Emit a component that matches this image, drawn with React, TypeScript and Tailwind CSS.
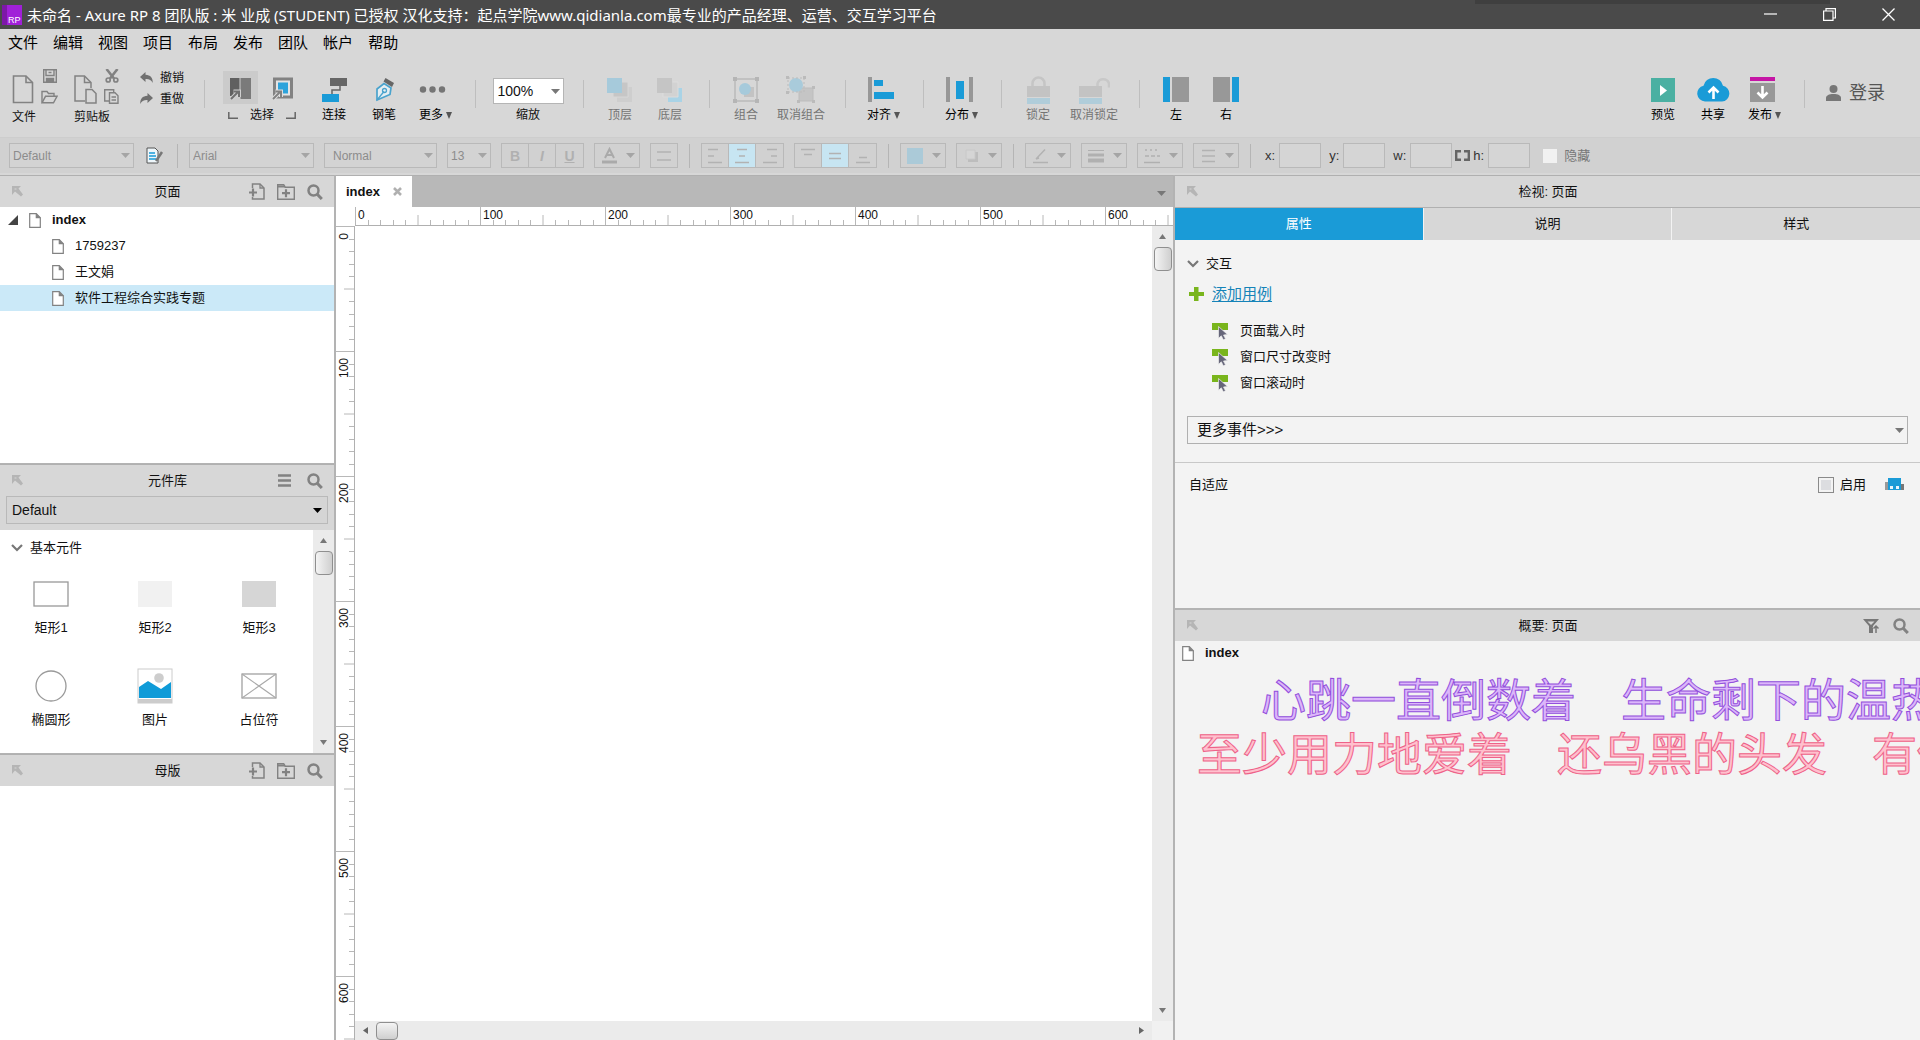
import { ReactNode } from "react";
import clsx from "clsx";

const GREY = "#828282";
const BLUE = "#1a9bd7";

function Caret({ className = "" }: { className?: string }) {
  return (
    <svg width="9" height="5" viewBox="0 0 9 5" className={clsx("shrink-0", className)}>
      <path d="M0 0h9L4.500 5z" fill="currentColor" />
    </svg>
  );
}

function PageIcon({ w = 12, h = 15 }: { w?: number; h?: number }) {
  return (
    <svg width={w} height={h} viewBox="0 0 12 15" fill="#fff" stroke={GREY} strokeWidth="1.2">
      <path d="M.7.7h6.600l4 4v9.600H.7z" />
      <path d="M7.300.7v4h4" fill={GREY} />
    </svg>
  );
}

function SearchIcon() {
  return (
    <svg width="16" height="16" viewBox="0 0 16 16" fill="none" stroke={GREY}>
      <circle cx="6.500" cy="6.500" r="5" strokeWidth="2.500" />
      <path d="M10 10l4.800 5" strokeWidth="3" />
    </svg>
  );
}

function AddPageIcon() {
  return (
    <svg width="16" height="17" viewBox="0 0 16 17" fill="none" stroke={GREY}>
      <path d="M3.500 5V1H11l4 4v11H3.500v-2" strokeWidth="1.500" />
      <path d="M11 1v4h4" strokeWidth="1.300" />
      <path d="M0 9.500h8M4 5.500v8" strokeWidth="2.200" />
    </svg>
  );
}

function AddFolderIcon() {
  return (
    <svg width="18" height="16" viewBox="0 0 18 16" fill="none" stroke={GREY}>
      <path d="M.7 15.300V.7h6l1.500 2.500h9.100v12.100z" strokeWidth="1.400" />
      <path d="M1 2.500h7" strokeWidth="2" />
      <path d="M5 9.200h8M9 5.200v8" strokeWidth="2.200" />
    </svg>
  );
}

function PanelHeader({ title, children }: { title: string; children?: ReactNode }) {
  return (
    <div className="grid h-8 shrink-0 grid-cols-[1fr_auto_1fr] items-center border-t border-[#b0b0b0] bg-[#d7d7d7] pr-[11px] pl-3">
      <svg width="11" height="11" viewBox="0 0 11 11">
        <path d="M0 0h9L6.500 2.500 11 8.500 9 10.500 3 5.500 0 9z" fill="#b5b5b5" />
        <path d="M2.500 3h2" stroke="#d7d7d7" />
      </svg>
      <h2 className="text-[13px] leading-5">{title}</h2>
      <div className="flex items-center justify-end gap-3">{children}</div>
    </div>
  );
}

function IconButton({ label, children }: { label: string; children: ReactNode }) {
  return (
    <button type="button" aria-label={label} className="flex items-center justify-center">
      {children}
    </button>
  );
}

/* ---------- main toolbar ---------- */

interface ToolProps {
  label: string;
  children: ReactNode;
  width?: string;
  disabled?: boolean;
  menu?: boolean;
}

function Tool({ label, children, width = "w-[50px]", disabled, menu }: ToolProps) {
  return (
    <button
      type="button"
      disabled={disabled}
      className={clsx("flex shrink-0 flex-col gap-[3px]", menu ? "w-[52px] items-start pl-2.5" : ["items-center", width])}
    >
      <span className="flex h-[29px] items-center">{children}</span>
      <span className={clsx("flex items-center gap-[3px] text-xs leading-4 whitespace-nowrap", disabled ? "text-[#747474]" : "text-black")}>
        {label}
        {menu && (
          <svg width="6" height="7" viewBox="0 0 6 7">
            <path d="M0 0h6L3 7z" fill="#555" />
          </svg>
        )}
      </span>
    </button>
  );
}

function ToolDivider() {
  return <div className="mt-[5px] mr-[11px] ml-[14px] h-7 w-px shrink-0 bg-[#bebebe]" />;
}

function FileGroup() {
  return (
    <div className="flex w-[62px] flex-col pl-3">
      <div className="-mt-1.5 flex gap-[7px]">
        <button type="button" aria-label="新建" className="pt-1.5">
          <svg width="22" height="29" viewBox="0 0 22 29" fill="none" stroke={GREY} strokeWidth="1.600">
            <path d="M1.500 1h12.500l6.500 6.500V27.500h-19z" />
            <path d="M14 1v6.500h6.500" />
          </svg>
        </button>
        <div className="flex flex-col justify-between">
          <IconButton label="保存">
            <svg width="14" height="14" viewBox="0 0 14 14" fill="none" stroke={GREY} strokeWidth="1.400">
              <path d="M.7.7h12.600v12.600H.7z" />
              <path d="M3 1v5.500h8V1M5.500 3.500h3" />
              <path d="M3.500 13V9.500h7V13" fill={GREY} />
            </svg>
          </IconButton>
          <IconButton label="打开">
            <svg width="17" height="14" viewBox="0 0 17 14" fill="none" stroke={GREY} strokeWidth="1.400">
              <path d="M1 12.500V1.500h5l1.500 2H13v2.500" />
              <path d="M1 12.800l3.500-6.500h11.500l-3.500 6.500z" />
            </svg>
          </IconButton>
        </div>
      </div>
      <span className="mt-[5px] text-xs leading-4">文件</span>
    </div>
  );
}

function ClipboardGroup() {
  return (
    <div className="flex w-[66px] flex-col pl-3">
      <div className="-mt-1.5 flex gap-[7px]">
        <button type="button" aria-label="粘贴" className="pt-1.5">
          <svg width="23" height="29" viewBox="0 0 23 29" fill="none" stroke={GREY} strokeWidth="1.500">
            <path d="M11 26H1V1h9.500l6.500 6.500V13" />
            <path d="M10.500 1v6.500H17" />
            <path d="M12 14.500h6l4 4V28H12z" />
          </svg>
        </button>
        <div className="flex flex-col justify-between">
          <IconButton label="剪切">
            <svg width="14" height="14" viewBox="0 0 14 14" fill="none" stroke={GREY}>
              <path d="M1.500 0l7.500 9.500M12.500 0L5 9.500" strokeWidth="2.600" />
              <circle cx="3.200" cy="11" r="2" strokeWidth="1.700" />
              <circle cx="10.800" cy="11" r="2" strokeWidth="1.700" />
            </svg>
          </IconButton>
          <IconButton label="复制">
            <svg width="15" height="15" viewBox="0 0 15 15" fill="none" stroke={GREY} strokeWidth="1.400">
              <path d="M5 12H.7V.7h9V3" />
              <path d="M5.500 3.700h5.500l3 3v7.600H5.500z" />
              <path d="M7.500 8h4.500M7.500 11h4.500" />
            </svg>
          </IconButton>
        </div>
      </div>
      <span className="mt-[5px] text-xs leading-4">剪贴板</span>
    </div>
  );
}

function UndoArrow({ flip }: { flip?: boolean }) {
  return (
    <svg width="13" height="11" viewBox="0 0 13 11" fill="#707070">
      {flip ? (
        <path d="M7.500 0L13 5l-5.500 5V7C4 6.800 1.500 8 .3 11 0 6 2.500 3 7.500 2.800z" />
      ) : (
        <path d="M5.500 0L0 5l5.500 5V7C9 6.800 11.500 8 12.700 11 13 6 10.500 3 5.500 2.800z" />
      )}
    </svg>
  );
}

function SelectGroup() {
  return (
    <div className="flex w-[93px] flex-col pl-[7px]">
      <div className="-mt-1 flex gap-3">
        <button type="button" aria-label="相交选中" className="flex h-[33px] w-[35px] items-center justify-center bg-[#cbcbcb]">
          <svg width="21" height="24" viewBox="0 0 21 24">
            <path d="M0 2h9.500v18H0z" fill="#606060" />
            <path d="M10.500 2H21v21H10.500z" fill="#7a7a7a" />
            <path d="M1 23l7-7M3.500 15.500H9V21" stroke="#d0d0d0" strokeWidth="4" fill="none" />
            <path d="M1 23l7-7M3.500 15.500H9V21" stroke="#707070" strokeWidth="2" fill="none" />
          </svg>
        </button>
        <button type="button" aria-label="包含选中" className="flex h-[33px] w-[26px] items-center justify-center">
          <svg width="22" height="24" viewBox="0 0 22 24">
            <path d="M2.500 3h17v18h-17z" fill="#e4e4e4" stroke={GREY} strokeWidth="3" />
            <path d="M6 6.500h10v11H6z" fill="#2da3db" />
            <path d="M1 23l7-7M3.500 15.500H9V21" stroke="#dedede" strokeWidth="4" fill="none" />
            <path d="M1 23l7-7M3.500 15.500H9V21" stroke={GREY} strokeWidth="2" fill="none" />
          </svg>
        </button>
      </div>
      <div className="mt-[3px] flex items-center gap-3 pl-[5px] text-xs leading-4">
        <svg width="10" height="7" viewBox="0 0 10 7" fill="none" stroke="#666" strokeWidth="1.500">
          <path d="M.8 0v6.200H10" />
        </svg>
        选择
        <svg width="10" height="7" viewBox="0 0 10 7" fill="none" stroke="#666" strokeWidth="1.500">
          <path d="M9.200 0v6.200H0" />
        </svg>
      </div>
    </div>
  );
}

function Toolbar() {
  return (
    <div className="flex h-[79px] shrink-0 items-start bg-[#d7d7d7] pt-[17px]">
      <FileGroup />
      <ClipboardGroup />
      <div className="-mt-[7px] flex w-[62px] flex-col gap-0.5 pl-3">
        <button type="button" className="flex h-[19px] items-center gap-[7px] text-xs leading-4">
          <UndoArrow />
          撤销
        </button>
        <button type="button" className="flex h-[19px] items-center gap-[7px] text-xs leading-4">
          <UndoArrow flip />
          重做
        </button>
      </div>
      <ToolDivider />
      <SelectGroup />
      <Tool label="连接">
        <svg width="25" height="25" viewBox="0 0 25 25">
          <path d="M8 1h17v8H8z" fill="#666" />
          <path d="M18 9v4h-8v4" fill="none" stroke="#666" strokeWidth="1.500" />
          <path d="M0 17h17v8H0z" fill={BLUE} />
        </svg>
      </Tool>
      <Tool label="钢笔">
        <svg width="19" height="25" viewBox="0 0 19 25">
          <path d="M2 23L2 12l7-5.500 7 4.500-1 6.500z" fill="#e6eef2" stroke="#4aa3cd" strokeWidth="1.700" />
          <path d="M2 23l7-8.500" stroke="#4aa3cd" strokeWidth="1.300" />
          <circle cx="9.500" cy="13.500" r="2" fill="none" stroke="#4aa3cd" strokeWidth="1.300" />
          <path d="M10.500 1l8.500 5-2 4-8.500-5.500z" fill="#666" />
        </svg>
      </Tool>
      <Tool label="更多" menu>
        <svg width="28" height="7" viewBox="0 0 28 7" fill="#757575">
          <circle cx="4" cy="3.500" r="3.200" />
          <circle cx="13.500" cy="3.500" r="3.200" />
          <circle cx="23" cy="3.500" r="3.200" />
        </svg>
      </Tool>
      <ToolDivider />
      <label className="flex w-[82px] shrink-0 flex-col items-center gap-[3px]">
        <span className="flex h-[29px] items-end">
          <span className="relative flex items-center">
            <select className="h-[26px] w-[71px] appearance-none border border-[#b5b5b5] bg-white pl-1 text-sm">
              <option>100%</option>
            </select>
            <Caret className="pointer-events-none absolute right-1 text-[#777]" />
          </span>
        </span>
        <span className="text-xs leading-4">缩放</span>
      </label>
      <ToolDivider />
      <Tool label="顶层" disabled>
        <svg width="26" height="26" viewBox="0 0 26 26">
          <path d="M18 10h7v15H10v-6" fill="#cecece" />
          <path d="M16 5h5v15H6v-4" fill="#c6c6c6" stroke="#d7d7d7" />
          <path d="M0 1h15v15H0z" fill="#a6cadb" />
        </svg>
      </Tool>
      <Tool label="底层" disabled>
        <svg width="26" height="26" viewBox="0 0 26 26">
          <path d="M18 11h7v14H11v-6h7z" fill="#a9d3e6" />
          <path d="M16 5h5v15H6v-4" fill="#d2d2d2" stroke="#dcdcdc" />
          <path d="M0 1h15v15H0z" fill="#c5c5c5" />
        </svg>
      </Tool>
      <ToolDivider />
      <Tool label="组合" disabled>
        <svg width="28" height="28" viewBox="0 0 28 28">
          <path d="M3 3h22v22H3z" fill="none" stroke="#bbb" strokeWidth="1.500" />
          <path d="M1 1h4v4H1zM23 1h4v4h-4zM1 23h4v4H1zM23 23h4v4h-4z" fill="#b5b5b5" />
          <path d="M12 11h10v10H12z" fill="#c3c3c3" />
          <circle cx="13" cy="13" r="6" fill="#a6cadb" />
        </svg>
      </Tool>
      <Tool label="取消组合" width="w-[60px]" disabled>
        <svg width="30" height="28" viewBox="0 0 30 28">
          <path d="M13 12h14v13H13z" fill="#c5c5c5" stroke="#bdbdbd" />
          <circle cx="10" cy="9" r="7" fill="#a9cbdb" />
          <path d="M2 2h16v14H2z" fill="none" stroke="#bbb" strokeDasharray="2 2" />
          <path d="M0 0h3v3H0zM17 0h3v3h-3zM0 15h3v3H0zM26 10h3v3h-3zM11 24h3v3h-3zM26 24h3v3h-3z" fill="#bbb" />
        </svg>
      </Tool>
      <ToolDivider />
      <Tool label="对齐" menu>
        <svg width="28" height="27" viewBox="0 0 28 27">
          <path d="M1 1h4v25H1z" fill="#979797" />
          <path d="M7 4h9v6H7zM7 16h20v7H7z" fill={BLUE} />
        </svg>
      </Tool>
      <ToolDivider />
      <Tool label="分布" menu>
        <svg width="29" height="27" viewBox="0 0 29 27">
          <path d="M1 1h4v25H1zM24 1h4v25h-4z" fill="#979797" />
          <path d="M11 5h8v18h-8z" fill={BLUE} />
        </svg>
      </Tool>
      <ToolDivider />
      <Tool label="锁定" disabled>
        <svg width="23" height="28" viewBox="0 0 23 28">
          <path d="M5.500 11V7.500a6 6 0 0 1 12 0V11" fill="none" stroke="#c5c5c5" strokeWidth="2.500" />
          <path d="M0 10h23v11H0z" fill="#c3c3c3" />
          <path d="M0 22h23v6H0z" fill="#b0cdda" />
        </svg>
      </Tool>
      <Tool label="取消锁定" width="w-[62px]" disabled>
        <svg width="31" height="28" viewBox="0 0 31 28">
          <path d="M18.500 11V7.500a6 6 0 0 1 11.500 0v4" fill="none" stroke="#c8c8c8" strokeWidth="2.500" />
          <path d="M0 10h23v11H0z" fill="#c3c3c3" />
          <path d="M0 22h23v6H0z" fill="#b0cdda" />
        </svg>
      </Tool>
      <ToolDivider />
      <Tool label="左">
        <svg width="26" height="25" viewBox="0 0 26 25">
          <path d="M0 0h7v25H0z" fill={BLUE} />
          <path d="M9 0h17v25H9z" fill="#989898" />
        </svg>
      </Tool>
      <Tool label="右">
        <svg width="26" height="25" viewBox="0 0 26 25">
          <path d="M0 0h17v25H0z" fill="#989898" />
          <path d="M19 0h7v25h-7z" fill={BLUE} />
        </svg>
      </Tool>

      <div className="ml-auto flex items-start pr-[35px]">
        <Tool label="预览">
          <svg width="24" height="24" viewBox="0 0 24 24">
            <path d="M0 0h24v24H0z" fill="#4bb0a2" />
            <path d="M9 7l7 5.500L9 18z" fill="#fff" />
          </svg>
        </Tool>
        <Tool label="共享">
          <svg width="33" height="25" viewBox="0 0 33 25">
            <path d="M8 24.500a8 8 0 0 1-1.500-15.800 10 10 0 0 1 19.500 0A8 8 0 0 1 25 24.500z" fill={BLUE} />
            <path d="M16.500 22V11M11.500 15.500l5-5 5 5" fill="none" stroke="#fff" strokeWidth="2.600" />
          </svg>
        </Tool>
        <Tool label="发布" menu>
          <svg width="27" height="25" viewBox="0 0 27 25">
            <path d="M2 0h25v4H2z" fill="#c515a5" />
            <path d="M2 6h25v19H2z" fill="#989898" />
            <path d="M14.500 9v11M9.500 15.500l5 5 5-5" fill="none" stroke="#fff" strokeWidth="2.600" />
          </svg>
        </Tool>
        <ToolDivider />
        <button type="button" className="mt-1.5 ml-2.5 flex items-center gap-2 text-lg leading-6 text-[#555]">
          <svg width="15" height="16" viewBox="0 0 15 16" fill="#777">
            <circle cx="7.500" cy="4" r="4" />
            <path d="M0 16v-3c0-2.500 3-4 7.500-4s7.500 1.500 7.500 4v3z" />
          </svg>
          登录
        </button>
      </div>
    </div>
  );
}

/* ---------- format bar ---------- */

function FormatSelect({ label, value, width }: { label: string; value: string; width: string }) {
  return (
    <div className="relative flex shrink-0 items-center">
      <select
        aria-label={label}
        disabled
        className={clsx("h-[25px] appearance-none border border-[#b9b9b9] bg-[#d3d3d3] px-[3px] text-xs text-[#8c8c8c] opacity-100", width)}
      >
        <option>{value}</option>
      </select>
      <Caret className="pointer-events-none absolute right-1 text-[#a5a5a5]" />
    </div>
  );
}

function FormatMenu({ label, children }: { label: string; children: ReactNode }) {
  return (
    <button
      type="button"
      disabled
      aria-label={label}
      className="flex h-[25px] w-[46px] shrink-0 items-center justify-between border border-[#b9b9b9] pr-1 pl-1.5 text-[#a5a5a5]"
    >
      {children}
      <Caret />
    </button>
  );
}

function ToggleGroup({ items, active }: { items: { label: string; icon: ReactNode }[]; active?: number }) {
  return (
    <div className="flex h-[25px] shrink-0 divide-x divide-[#b9b9b9] border border-[#b9b9b9]">
      {items.map((item, i) => (
        <button
          key={item.label}
          type="button"
          disabled
          aria-label={item.label}
          className={clsx("flex w-[27px] items-center justify-center text-sm leading-4 text-[#b0b0b0]", i === active && "bg-[#c7e5f2]")}
        >
          {item.icon}
        </button>
      ))}
    </div>
  );
}

function Lines({ d }: { d: string }) {
  return (
    <svg width="16" height="16" viewBox="0 0 16 16" fill="none" stroke="#b2b2b2" strokeWidth="1.500">
      <path d={d} />
    </svg>
  );
}

const textStyles = [
  { label: "粗体", icon: <b>B</b> },
  { label: "斜体", icon: <i className="font-bold">I</i> },
  { label: "下划线", icon: <u className="font-bold">U</u> },
];
const hAlign = [
  { label: "左对齐", icon: <Lines d="M1 1.500h10M1 8h6M1 14.500h14" /> },
  { label: "居中", icon: <Lines d="M3 1.500h10M5 8h6M1 14.500h14" /> },
  { label: "右对齐", icon: <Lines d="M5 1.500h10M9 8h6M1 14.500h14" /> },
];
const vAlign = [
  { label: "顶部", icon: <Lines d="M1 1.500h14M4 6.500h8" /> },
  { label: "中部", icon: <Lines d="M2 5.500h12M2 10.500h12" /> },
  { label: "底部", icon: <Lines d="M4 9.500h8M1 14.500h14" /> },
];

function FormatDivider() {
  return <div className="mx-px h-6 w-px shrink-0 bg-[#b5b5b5]" />;
}

function CoordField({ name }: { name: string }) {
  return (
    <label className="flex items-center gap-1 text-[13px] text-[#333]">
      {name}:
      <input type="text" disabled className="h-[25px] w-[42px] border border-[#b9b9b9] bg-[#d5d5d5]" />
    </label>
  );
}

function FormatBar() {
  return (
    <div className="flex h-[38px] shrink-0 items-center gap-2.5 border-t border-b-2 border-t-[#cdcdcd] border-b-[#d7d7d7] bg-[#d1d1d1] pl-[9px]">
      <FormatSelect label="样式" value="Default" width="w-[125px]" />
      <IconButton label="样式管理">
        <svg width="22" height="17" viewBox="0 0 22 17">
          <path d="M3 1h8l3 3v12H3z" fill="#eef6fa" stroke="#555" />
          <path d="M5 6h6M5 9h7M5 12h7" stroke={BLUE} strokeWidth="1.500" />
          <path d="M12 14l6-9" stroke="#777" strokeWidth="2.500" />
        </svg>
      </IconButton>
      <FormatDivider />
      <FormatSelect label="字体" value="Arial" width="w-[125px]" />
      <FormatSelect label="字型" value="Normal" width="w-[113px] pl-2" />
      <FormatSelect label="字号" value="13" width="w-11" />
      <ToggleGroup items={textStyles} />
      <FormatMenu label="字体颜色">
        <svg width="17" height="17" viewBox="0 0 17 17" fill="none" stroke="#aaa">
          <path d="M4 11L8.500 2 13 11M6 8h5" strokeWidth="2" />
          <path d="M1 15h15" strokeWidth="3" />
        </svg>
      </FormatMenu>
      <button type="button" disabled aria-label="项目符号" className="flex h-[25px] w-7 items-center justify-center border border-[#b9b9b9]">
        <Lines d="M1 4h14M1 12h14" />
      </button>
      <FormatDivider />
      <ToggleGroup items={hAlign} active={1} />
      <ToggleGroup items={vAlign} active={1} />
      <FormatDivider />
      <FormatMenu label="填充颜色">
        <span className="size-4 bg-[#abcad8]" />
      </FormatMenu>
      <FormatMenu label="阴影">
        <svg width="17" height="16" viewBox="0 0 17 16">
          <path d="M5 4h10v10H5z" fill="#bdbdbd" />
          <path d="M3 2h9v9H3z" fill="#d5d5d5" stroke="#c8c8c8" />
        </svg>
      </FormatMenu>
      <FormatDivider />
      <FormatMenu label="线段颜色">
        <Lines d="M4 11L13 1.500M4 11l3-1M1 14.500h15" />
      </FormatMenu>
      <FormatMenu label="线宽">
        <svg width="16" height="14" viewBox="0 0 16 14" stroke="#b0b0b0">
          <path d="M0 1.500h16" />
          <path d="M0 6h16" strokeWidth="3" />
          <path d="M0 11.500h16" strokeWidth="4" />
        </svg>
      </FormatMenu>
      <FormatMenu label="线型">
        <svg width="16" height="16" viewBox="0 0 16 16" stroke="#b0b0b0" strokeWidth="1.500">
          <path d="M1 2h15" strokeDasharray="2 3" />
          <path d="M1 8h15" strokeDasharray="4 2" />
          <path d="M0 14.500h16" />
        </svg>
      </FormatMenu>
      <FormatMenu label="箭头样式">
        <Lines d="M2 2.500h13M2 8h13M2 13.500h13" />
      </FormatMenu>
      <FormatDivider />
      <div className="ml-[3px] flex items-center gap-2">
        <CoordField name="x" />
        <CoordField name="y" />
        <div className="flex items-center gap-[3px]">
          <CoordField name="w" />
          <svg width="15" height="11" viewBox="0 0 15 11" fill="none" stroke="#666" strokeWidth="2.400">
            <path d="M6 1.200H1.200v8.600H6M9 1.200h4.800v8.600H9" />
          </svg>
          <CoordField name="h" />
        </div>
      </div>
      <label className="ml-[3px] flex items-center gap-[7px] text-[13px] text-[#777]">
        <input type="checkbox" disabled className="size-3.5 appearance-none bg-[#f1f1f1]" />
        隐藏
      </label>
    </div>
  );
}

/* ---------- left column ---------- */

const pages = ["1759237", "王文娟", "软件工程综合实践专题"];

function PagesPanel() {
  return (
    <section className="flex h-[288px] shrink-0 flex-col bg-white">
      <PanelHeader title="页面">
        <IconButton label="添加页面"><AddPageIcon /></IconButton>
        <IconButton label="添加文件夹"><AddFolderIcon /></IconButton>
        <IconButton label="搜索"><SearchIcon /></IconButton>
      </PanelHeader>
      <ul className="text-[13px] leading-[26px]">
        <li className="flex h-[26px] items-center gap-[11px] pl-2 font-bold">
          <svg width="10" height="10" viewBox="0 0 10 10">
            <path d="M10 0v10H0z" fill="#444" />
          </svg>
          <PageIcon />
          index
        </li>
        {pages.map((page, i) => (
          <li key={page} className={clsx("flex h-[26px] items-center gap-[11px] pl-[52px]", i === 2 && "bg-[#cbe9f8]")}>
            <PageIcon />
            {page}
          </li>
        ))}
      </ul>
    </section>
  );
}

const shapes = [
  { name: "矩形1", icon: <rect x="1" y="6" width="34" height="24" fill="#fff" stroke="#999" strokeWidth="1.300" /> },
  { name: "矩形2", icon: <rect x="1" y="5" width="34" height="26" fill="#f1f1f1" /> },
  { name: "矩形3", icon: <rect x="1" y="5" width="34" height="26" fill="#d6d6d6" /> },
  { name: "椭圆形", icon: <circle cx="18" cy="18" r="15" fill="#fff" stroke="#999" strokeWidth="1.300" /> },
  {
    name: "图片",
    icon: (
      <>
        <rect x="1" y="1" width="34" height="34" fill="#fff" stroke="#ccc" />
        <circle cx="22" cy="10" r="4.800" fill="#cdcdcd" />
        <path d="M2 19l9-6 13 8 10-7v16H2z" fill="#0f9bd8" />
        <path d="M1 31h34v4H1z" fill="#ccc" />
      </>
    ),
  },
  {
    name: "占位符",
    icon: (
      <g fill="#fff" stroke="#999" strokeWidth="1.200">
        <rect x="1" y="6" width="34" height="24" />
        <path d="M1 6l34 24M35 6L1 30" stroke="#aaa" />
      </g>
    ),
  },
];

function ChevronDown() {
  return (
    <svg width="12" height="8" viewBox="0 0 12 8" fill="none" stroke="#777" strokeWidth="2.200">
      <path d="M1 1l5 5 5-5" />
    </svg>
  );
}

function VerticalScrollbar() {
  return (
    <div className="flex w-[21px] shrink-0 flex-col items-center bg-[#ebebeb] py-2">
      <svg width="7" height="5" viewBox="0 0 7 5"><path d="M0 5h7L3.500 0z" fill="#777" /></svg>
      <div className="mt-2 h-6 w-[18px] rounded-sm border border-[#8f8f8f] bg-gradient-to-r from-[#f4f4f4] to-[#cfcfcf]" />
      <svg width="7" height="5" viewBox="0 0 7 5" className="mt-auto"><path d="M0 0h7L3.500 5z" fill="#777" /></svg>
    </div>
  );
}

function LibraryPanel() {
  return (
    <section className="flex h-[290px] shrink-0 flex-col border-t-2 border-[#b3b3b3] bg-[#d7d7d7]">
      <div className="-mt-px">
        <PanelHeader title="元件库">
          <IconButton label="选项">
            <svg width="13" height="13" viewBox="0 0 13 13" stroke={GREY} strokeWidth="2.600">
              <path d="M0 1.500h13M0 6.500h13M0 11.500h13" />
            </svg>
          </IconButton>
          <span className="ml-1 flex"><IconButton label="搜索"><SearchIcon /></IconButton></span>
        </PanelHeader>
      </div>
      <div className="relative mx-1.5 mb-1.5 flex items-center">
        <select aria-label="元件库" className="h-7 w-full appearance-none border border-[#b9b9b9] bg-[#d5d5d5] pl-[5px] text-sm">
          <option>Default</option>
        </select>
        <Caret className="pointer-events-none absolute right-1.5 text-black" />
      </div>
      <div className="flex min-h-0 flex-1 bg-white">
        <div className="flex-1 overflow-hidden">
          <div className="flex h-9 items-center gap-[7px] pl-[11px] text-[13px]">
            <ChevronDown />
            基本元件
          </div>
          <div className="grid grid-cols-[repeat(3,104px)] gap-y-[22px] pt-2.5">
            {shapes.map((shape) => (
              <div key={shape.name} className="flex h-[70px] flex-col items-center gap-1.5 pr-0.5 text-[13px] leading-5">
                <svg width="36" height="36" viewBox="0 0 36 36">{shape.icon}</svg>
                {shape.name}
              </div>
            ))}
          </div>
        </div>
        <VerticalScrollbar />
      </div>
    </section>
  );
}

function MastersPanel() {
  return (
    <section className="flex flex-1 flex-col border-t-2 border-[#b3b3b3] bg-white">
      <div className="-mt-px">
        <PanelHeader title="母版">
          <IconButton label="添加母版"><AddPageIcon /></IconButton>
          <IconButton label="添加文件夹"><AddFolderIcon /></IconButton>
          <IconButton label="搜索"><SearchIcon /></IconButton>
        </PanelHeader>
      </div>
    </section>
  );
}

/* ---------- canvas ---------- */

const marks = [0, 100, 200, 300, 400, 500, 600];
const minorTicks = [1, 2, 3, 4, 6, 7, 8, 9];

function HorizontalRuler() {
  return (
    <div className="ml-[19px] flex h-[19px] shrink-0 overflow-hidden border-b border-[#b0b0b0]">
      {marks.map((mark) => (
        <div key={mark} className="relative w-[125px] shrink-0 pl-[3px] text-xs leading-4">
          {mark}
          <svg width="125" height="18" className="absolute inset-0" stroke="#b8b8b8">
            <path d="M.5 0v18M63 8v10" />
            {minorTicks.map((t) => (
              <path key={t} d={`M${Math.round(t * 12.5) + 0.5} 13v5`} />
            ))}
          </svg>
        </div>
      ))}
    </div>
  );
}

function VerticalRuler() {
  return (
    <div className="flex w-[19px] shrink-0 flex-col overflow-hidden border-r border-[#b0b0b0]">
      {marks.map((mark) => (
        <div key={mark} className="relative h-[125px] w-[18px] shrink-0">
          <svg width="18" height="125" className="absolute inset-0" stroke="#b8b8b8">
            <path d="M0 .5h18M8 63h10" />
            {minorTicks.map((t) => (
              <path key={t} d={`M13 ${Math.round(t * 12.5) + 0.5}h5`} />
            ))}
          </svg>
          <span className="absolute top-[7px] left-0 rotate-180 text-xs leading-4 [writing-mode:vertical-rl]">{mark}</span>
        </div>
      ))}
    </div>
  );
}

function CanvasArea() {
  return (
    <main className="flex min-w-0 flex-1 flex-col bg-white">
      <div className="flex h-8 shrink-0 items-stretch border-t border-[#b0b0b0] bg-[#b8b8b8]">
        <div className="flex w-[76px] items-center gap-[13px] bg-white pl-2.5 text-[13px] font-bold">
          index
          <IconButton label="关闭">
            <svg width="9" height="9" viewBox="0 0 9 9" stroke="#b0b0b0" strokeWidth="2.600">
              <path d="M1 1l7 7M8 1L1 8" />
            </svg>
          </IconButton>
        </div>
        <button type="button" aria-label="标签列表" className="mt-1 mr-[7px] ml-auto text-[#777]">
          <Caret />
        </button>
      </div>
      <HorizontalRuler />
      <div className="flex min-h-0 flex-1">
        <VerticalRuler />
        <div className="flex min-w-0 flex-1 flex-col">
          <div className="flex-1" />
          <div className="flex h-[19px] shrink-0 items-center bg-[#ebebeb] px-2">
            <svg width="5" height="7" viewBox="0 0 5 7"><path d="M5 0v7L0 3.500z" fill="#666" /></svg>
            <div className="ml-2 h-[18px] w-[22px] rounded-sm border border-[#8f8f8f] bg-gradient-to-b from-[#f4f4f4] to-[#cfcfcf]" />
            <svg width="5" height="7" viewBox="0 0 5 7" className="ml-auto"><path d="M0 0v7l5-3.500z" fill="#666" /></svg>
          </div>
        </div>
        <div className="flex flex-col bg-[#f1f1f1] pb-[19px]">
          <div className="flex flex-1"><VerticalScrollbar /></div>
        </div>
      </div>
    </main>
  );
}

/* ---------- right column ---------- */

const tabs = ["属性", "说明", "样式"];
const events = ["页面载入时", "窗口尺寸改变时", "窗口滚动时"];

function InspectorPanel() {
  return (
    <section className="flex h-[433px] shrink-0 flex-col">
      <PanelHeader title="检视: 页面" />
      <div className="grid h-[33px] shrink-0 grid-cols-3 gap-px border-t border-[#b0b0b0] bg-[#f3f3f3]">
        {tabs.map((tab, i) => (
          <button key={tab} type="button" className={clsx("text-[13px]", i === 0 ? "bg-[#1a9bd7] text-white" : "bg-[#d7d7d7]")}>
            {tab}
          </button>
        ))}
      </div>
      <div className="border-b border-[#c8c8c8] px-3 pt-3 pb-[18px]">
        <div className="flex h-6 items-center gap-[7px] text-[13px]">
          <ChevronDown />
          交互
        </div>
        <div className="mt-1.5 flex h-6 items-center gap-2 pl-0.5">
          <svg width="15" height="14" viewBox="0 0 15 14">
            <path d="M5 0h4.500v5H15v4H9.500v5H5V9H0V5h5z" fill="#79b51c" />
          </svg>
          <a href="#add-case" className="text-[15px] leading-6 text-[#1583b8] underline underline-offset-2">添加用例</a>
        </div>
        <ul className="mt-3 mb-5 pl-[25px] text-[13px]">
          {events.map((event) => (
            <li key={event} className="flex h-[26px] items-center gap-3">
              <svg width="16" height="17" viewBox="0 0 16 17">
                <path d="M0 0h16v7H0z" fill="#79b51c" />
                <path d="M6.500 3.500l9 8-4 .5 2 3.800-2.200 1-2-4-2.800 2.500z" fill="#66667a" stroke="#eee" strokeWidth=".7" />
              </svg>
              {event}
            </li>
          ))}
        </ul>
        <div className="relative flex items-center">
          <select aria-label="更多事件" className="h-7 w-full appearance-none border border-[#b0b0b0] bg-[#f3f3f3] pl-[9px] text-[15px]">
            <option>更多事件&gt;&gt;&gt;</option>
          </select>
          <Caret className="pointer-events-none absolute right-1 text-[#777]" />
        </div>
      </div>
      <div className="flex items-center justify-between py-3 pr-4 pl-3.5 text-[13px]">
        自适应
        <div className="flex items-center gap-[19px]">
          <label className="flex items-center gap-1.5">
            <input type="checkbox" className="size-4 appearance-none border border-[#8a8a8a] bg-[#dcdde0] shadow-[inset_0_0_0_2px_#f3f3f3]" />
            启用
          </label>
          <IconButton label="管理自适应视图">
            <svg width="19" height="13" viewBox="0 0 19 13">
              <path d="M0 4h5v8H0z" fill="#999" />
              <path d="M15 6h4v6h-4z" fill="#777" />
              <path d="M3 0h13v12H3z" fill="#1a9bd7" />
              <path d="M5 8h3v3H5zM11 8h3v3h-3z" fill="#e9f5fb" />
            </svg>
          </IconButton>
        </div>
      </div>
    </section>
  );
}

function OutlinePanel() {
  return (
    <section className="relative flex min-h-0 flex-1 flex-col overflow-hidden border-t-2 border-[#b3b3b3]">
      <div className="-mt-px">
        <PanelHeader title="概要: 页面">
          <IconButton label="筛选">
            <svg width="18" height="14" viewBox="0 0 18 14">
              <path d="M0 0h16l-6 7v7H6V7z" fill="#777" />
              <path d="M4.500 2.500h7L8 6z" fill="#d7d7d7" />
              <path d="M13 14V7M10.500 9.500L13 7l2.500 2.500" fill="none" stroke="#d7d7d7" strokeWidth="3" />
              <path d="M13 14V7M10.500 9.500L13 7l2.500 2.500" fill="none" stroke="#777" strokeWidth="1.500" />
            </svg>
          </IconButton>
          <IconButton label="搜索"><SearchIcon /></IconButton>
        </PanelHeader>
      </div>
      <div className="flex h-6 items-center gap-[11px] pl-[7px] text-[13px] font-bold">
        <PageIcon />
        index
      </div>
      {/* floating desktop lyrics */}
      <div className="pointer-events-none absolute top-[61px] left-[22px] font-['Noto_Sans_CJK_SC',sans-serif] text-[45px] leading-[54px] whitespace-nowrap">
        <p className="pl-16 text-[#dcb6fa] [-webkit-text-stroke:1px_#9350dc]">心跳一直倒数着　生命剩下的温热</p>
        <p className="text-[#ffc0cd] [-webkit-text-stroke:1px_#ee6289]">至少用力地爱着　还乌黑的头发　有你</p>
      </div>
    </section>
  );
}

/* ---------- window ---------- */

const menus = ["文件", "编辑", "视图", "项目", "布局", "发布", "团队", "帐户", "帮助"];

function TitleBar() {
  return (
    <header className="relative flex h-[29px] shrink-0 items-center bg-[#4a4a4a] text-white">
      <div className="absolute top-0 right-[90px] h-1 w-[355px] bg-[#3f3f3f]" />
      <svg width="20" height="20" viewBox="0 0 20 20" className="mr-[5px] ml-0.5">
        <path d="M0 0h20v20H0z" fill="#a020d8" />
        <path d="M0 0h5v20H0z" fill="#7d18a8" />
        <text x="6" y="18" fontSize="9" fill="#fff" fontFamily="Liberation Sans">RP</text>
      </svg>
      <h1 className="font-['Noto_Sans','Noto_Sans_CJK_SC',sans-serif] text-[15px] leading-5 whitespace-nowrap">
        未命名 - Axure RP 8 团队版 : 米 业成 (STUDENT) 已授权 汉化支持：起点学院www.qidianla.com最专业的产品经理、运营、交互学习平台
      </h1>
      <div className="ml-auto flex items-center gap-[46px] pr-[25px]">
        <IconButton label="最小化">
          <svg width="13" height="13" viewBox="0 0 13 13"><path d="M0 6h13" stroke="#fff" strokeWidth="1.200" /></svg>
        </IconButton>
        <IconButton label="还原">
          <svg width="13" height="13" viewBox="0 0 13 13" fill="none" stroke="#fff" strokeWidth="1.200">
            <path d="M.6 3h9.400v9.400H.6zM3 3V.6h9.400V10H10" />
          </svg>
        </IconButton>
        <IconButton label="关闭">
          <svg width="13" height="13" viewBox="0 0 13 13" stroke="#fff" strokeWidth="1.300">
            <path d="M.5.5l12 12M12.500.5l-12 12" />
          </svg>
        </IconButton>
      </div>
    </header>
  );
}

export default function App() {
  return (
    <div className="flex h-screen flex-col overflow-hidden bg-[#d7d7d7] font-['Liberation_Sans','Noto_Sans_CJK_SC',sans-serif] text-[#111]">
      <TitleBar />
      <nav className="flex h-[29px] shrink-0 items-center gap-[15px] bg-[#d7d7d7] pl-2 text-[15px] text-black">
        {menus.map((menu) => (
          <button key={menu} type="button">{menu}</button>
        ))}
      </nav>
      <Toolbar />
      <FormatBar />
      <div className="flex min-h-0 flex-1">
        <aside className="flex w-[336px] shrink-0 flex-col border-r-2 border-[#b3b3b3]">
          <PagesPanel />
          <LibraryPanel />
          <MastersPanel />
        </aside>
        <CanvasArea />
        <aside className="flex w-[747px] shrink-0 flex-col border-l-2 border-[#b3b3b3] bg-[#f3f3f3]">
          <InspectorPanel />
          <OutlinePanel />
        </aside>
      </div>
    </div>
  );
}
